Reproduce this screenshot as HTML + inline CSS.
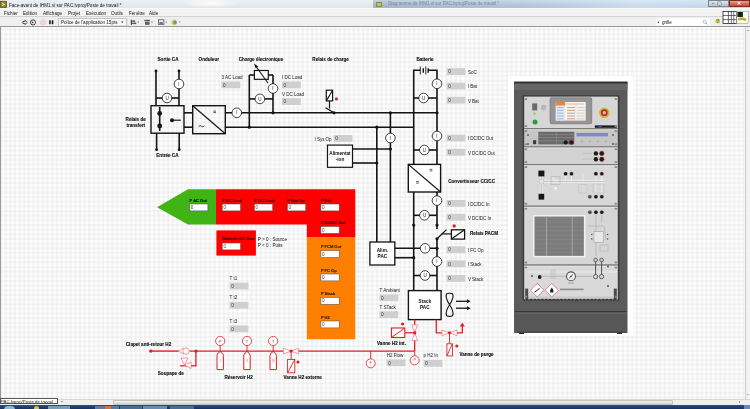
<!DOCTYPE html>
<html><head><meta charset="utf-8">
<style>
html,body{margin:0;padding:0;width:750px;height:409px;overflow:hidden;background:#fff;font-family:'Liberation Sans',sans-serif;}
.abs{position:absolute}
#title{left:0;top:0;width:750px;height:8px;background:linear-gradient(#eef1f4,#dfe4ea)}
#title2{left:373px;top:0;width:377px;height:8px;background:linear-gradient(rgba(255,255,255,.35),rgba(255,255,255,0) 70%),linear-gradient(90deg,#a4b6ce 0%,#b2c4da 40%,#cadcee 70%,#c2d6ea 100%)}
#menu{left:0;top:8px;width:750px;height:9px;background:#f3f3f3;border-top:0.6px solid #fafafa;border-bottom:1px solid #d4d4d4;box-sizing:border-box}
#tool{left:0;top:17px;width:750px;height:10px;background:#efefef;border-bottom:1px solid #9a9a9a;box-sizing:border-box}
#canvas{left:0;top:27px;width:745px;height:372px;background-color:#fcfcfc;
 background-image:linear-gradient(90deg,rgba(120,120,120,0) 0,rgba(120,120,120,.11) 1px,rgba(120,120,120,0) 2px,transparent 2px),linear-gradient(rgba(120,120,120,0) 0,rgba(120,120,120,.11) 1px,rgba(120,120,120,0) 2px,transparent 2px);
 background-size:4.653px 4.671px;background-position:-0.9px -3.2px;border-left:1px solid #9a9a9a;box-sizing:border-box}
.t{font-size:4.6px;color:#111;white-space:nowrap;line-height:1;will-change:transform}
</style></head><body>
<div id="title" class="abs"></div>
<div class="abs" style="left:180px;top:0;width:60px;height:8px;background:radial-gradient(ellipse at 50% 40%,#fdfdfd,rgba(255,255,255,0) 70%)"></div>
<div id="title2" class="abs"></div>
<div class="abs" style="left:376px;top:1.5px;width:6px;height:5px;background:#c8c060;border:0.5px solid #8a8a40;box-sizing:border-box"></div>
<div class="abs t" style="left:388px;top:2.4px;color:#7a8aa0;font-size:4.5px;filter:blur(0.7px)">Diagramme de IHM1.vi sur PAC.lvproj/Poste de travail *</div>
<div class="abs" style="left:708px;top:0;width:20.5px;height:7.2px;background:linear-gradient(#dfe4ea,#b9c2cc);border:0.5px solid #7b8593;box-sizing:border-box"></div>
<div class="abs t" style="left:712px;top:1.5px;font-size:4.5px;color:#333">–&#160;&#160;▢</div>
<div class="abs" style="left:728.5px;top:0;width:21.5px;height:7.2px;background:linear-gradient(#e8a090,#c8452e);border:0.5px solid #7a3020;box-sizing:border-box"></div>
<div class="abs t" style="left:736.5px;top:1.2px;font-size:5px;color:#fff;font-weight:bold">✕</div>
<div class="abs t" style="left:9.3px;top:3.7px;color:#222">Face-avant de IHM1.vi sur PAC.lvproj/Poste de travail *</div>
<svg class="abs" style="left:0;top:0" width="8" height="9" viewBox="0 0 8 9"><rect x="0.6" y="1.2" width="6" height="6.4" fill="#8a8a20" stroke="#4a4a20" stroke-width="0.7"/><path d="M2,2.6 L5.4,4.4 L2,6.2 L2,5 L3.6,4.4 L2,3.8 Z" fill="#f0f060"/></svg>
<div id="menu" class="abs"></div>
<div class="abs t" style="left:3.5px;top:12px">Fichier</div>
<div class="abs t" style="left:22.7px;top:12px">Edition</div>
<div class="abs t" style="left:42.7px;top:12px">Affichage</div>
<div class="abs t" style="left:68px;top:12px">Projet</div>
<div class="abs t" style="left:85.7px;top:12px">Exécution</div>
<div class="abs t" style="left:111px;top:12px">Outils</div>
<div class="abs t" style="left:128.7px;top:12px">Fenêtre</div>
<div class="abs t" style="left:149.3px;top:12px">Aide</div>
<div id="tool" class="abs"></div>
<svg class="abs" style="left:0;top:0;will-change:transform" width="750" height="28" viewBox="0 0 750 28">
 <path d="M22.9,21.4 L24.9,21.4 L24.9,20.2 L27.3,22.4 L24.9,24.6 L24.9,23.4 L22.9,23.4 Z" fill="#fff" stroke="#222" stroke-width="0.8" stroke-linejoin="round"/>
 <circle cx="33" cy="22.4" r="2.6" fill="#eee" stroke="#333" stroke-width="0.9"/>
 <path d="M31.8,21.2 L33.8,22.4 L31.8,23.6 Z" fill="#333"/>
 <circle cx="43" cy="22.3" r="2.7" fill="#ebd6da" stroke="#e4c4ca" stroke-width="0.5"/>
 <rect x="49.2" y="20.3" width="1.5" height="3.9" fill="#111"/><rect x="51.8" y="20.3" width="1.5" height="3.9" fill="#111"/>
 <rect x="58.7" y="18.6" width="67.5" height="7.4" fill="#fafafa" stroke="#a8a8a8" stroke-width="0.6"/>
 <path d="M121.2,21.6 L123.4,21.6 L122.3,23.2 Z" fill="#333"/>
 <line x1="127.1" y1="18.8" x2="127.1" y2="25.8" stroke="#c8c8c8" stroke-width="0.6"/>
 <rect x="130.8" y="19.6" width="1" height="5.2" fill="#222"/><rect x="132.2" y="20.4" width="3" height="1.5" fill="#555"/><rect x="132.2" y="22.6" width="4" height="1.5" fill="#555"/>
 <path d="M137.4,21.8 L139.0,21.8 L138.2,22.8 Z" fill="#333"/>
 <rect x="144.4" y="19.8" width="5.5" height="1.4" fill="#555"/><rect x="145.2" y="22" width="4" height="2.6" fill="#5a6a7a" stroke="#333" stroke-width="0.4"/>
 <path d="M151.2,21.8 L152.8,21.8 L152.0,22.8 Z" fill="#333"/>
 <rect x="158.4" y="19.8" width="5.5" height="4.8" fill="none" stroke="#444" stroke-width="0.7"/><rect x="159.4" y="22" width="3.5" height="2.6" fill="#6a7a8a"/>
 <path d="M165.4,21.8 L167.0,21.8 L166.2,22.8 Z" fill="#333"/>
 <circle cx="174.2" cy="22.4" r="2.8" fill="#d8d060"/><circle cx="175.0" cy="22.4" r="1.8" fill="#58a0a8"/>
 <path d="M178.8,21.8 L180.4,21.8 L179.6,22.8 Z" fill="#333"/>
 <rect x="656" y="18.4" width="54" height="7.2" fill="#fff"/>
 <path d="M659,21.2 L659,23.4 L657.4,22.3 Z" fill="#444"/>
 <circle cx="704.6" cy="21.8" r="1.6" fill="none" stroke="#9aa2aa" stroke-width="0.7"/><line x1="705.8" y1="23" x2="707.2" y2="24.4" stroke="#8a9098" stroke-width="0.9"/>
 <circle cx="717.8" cy="21.2" r="2.4" fill="#c8c050"/><text x="717.8" y="23" font-size="5" font-weight="bold" text-anchor="middle" fill="#7a8a20" font-family="Liberation Sans, sans-serif">?</text>
 <rect x="723" y="11.4" width="13.7" height="12.2" fill="#fff" stroke="#222" stroke-width="0.8"/>
 <line x1="728.4" y1="11.4" x2="728.4" y2="23.6" stroke="#333" stroke-width="0.7"/><line x1="731.3" y1="11.4" x2="731.3" y2="23.6" stroke="#333" stroke-width="0.7"/>
 <line x1="733.8" y1="11.4" x2="733.8" y2="23.6" stroke="#2a3a6a" stroke-width="0.7"/>
 <line x1="723" y1="15.5" x2="736.7" y2="15.5" stroke="#333" stroke-width="0.7"/><line x1="723" y1="19.6" x2="736.7" y2="19.6" stroke="#333" stroke-width="0.7"/>
 <rect x="736.7" y="11.4" width="11.6" height="12.2" fill="#fbfbf0" stroke="#888" stroke-width="0.5"/>
 <rect x="737.4" y="12" width="5.5" height="5" fill="#0a2a10"/>
 <path d="M738,18.5 Q742,16.5 746.5,19 L746,21 Q742,19.5 738.5,20.5 Z" fill="#c0a830"/>
</svg>
<div class="abs t" style="left:60.5px;top:21.1px;font-size:4.6px;color:#222">Police de l'application 15pts</div>
<div class="abs t" style="left:661.6px;top:21.1px;font-size:4.6px;color:#111">grille</div>
<div id="canvas" class="abs"></div>
<div class="abs" style="left:745px;top:27px;width:5px;height:372px;background:linear-gradient(90deg,#eeeeee,#f8f8f8);border-left:0.5px solid #d0d0d0;box-sizing:border-box"></div>
<div class="abs" style="left:746.6px;top:394px;width:0;height:0;border-left:1.2px solid transparent;border-right:1.2px solid transparent;border-top:1.6px solid #666"></div>
<div class="abs" style="left:746.5px;top:30px;width:0;height:0;border-left:1.2px solid transparent;border-right:1.2px solid transparent;border-bottom:1.6px solid #555"></div>
<div class="abs" style="left:0;top:399px;width:750px;height:6px;background:#efefef;border-top:0.5px solid #d6d6d6;box-sizing:border-box"></div>
<div class="abs" style="left:113px;top:399.8px;width:559.7px;height:4.8px;background:linear-gradient(#f2f2f2,#d4d4d4);border:0.5px solid #c4c4c4;box-sizing:border-box;border-radius:1px"></div>
<div class="abs" style="left:0;top:398.4px;width:58px;height:6px;background:#fff;border:0.6px solid #555;box-sizing:border-box"></div>
<div class="abs t" style="left:1.2px;top:399.6px;font-size:4.4px;color:#222">PAC.lvproj/Poste de travail</div>
<div class="abs" style="left:60.5px;top:401px;width:0;height:0;border-left:1.2px solid transparent;border-right:1.2px solid transparent;border-top:1.5px solid #444"></div>
<div class="abs" style="left:739px;top:401px;width:0;height:0;border-top:1.2px solid transparent;border-bottom:1.2px solid transparent;border-left:1.5px solid #555"></div>
<div class="abs" style="left:0;top:405px;width:750px;height:4px;background:linear-gradient(#2a4c8a,#1a3066)"></div>
<div class="abs" style="left:4px;top:405.5px;width:11px;height:4px;border-radius:6px 6px 0 0;background:#8ab8d8"></div>
<div class="abs" style="left:34px;top:406px;width:5px;height:3px;border-radius:3px 3px 0 0;background:#d8c050"></div>
<div class="abs" style="left:48px;top:405.5px;width:22px;height:4px;background:#7a9ac0"></div>
<div class="abs" style="left:95px;top:405.5px;width:24px;height:4px;background:#5a7aa8"></div>
<div class="abs" style="left:105px;top:406px;width:6px;height:3px;background:#e07030"></div>
<div class="abs" style="left:120px;top:405.5px;width:22px;height:4px;background:#4a6a98"></div>
<div class="abs" style="left:143px;top:405.5px;width:24px;height:4px;background:#6a8ab8"></div>
<div class="abs" style="left:170px;top:405.5px;width:24px;height:4px;background:#4a6a98"></div>
<div class="abs" style="left:744px;top:405px;width:6px;height:4px;background:#6a88b0"></div>
<svg class="abs" style="left:0;top:0;will-change:transform" width="750" height="409" viewBox="0 0 750 409" font-family="Liberation Sans, sans-serif">
<rect x="508" y="76" width="125" height="260" fill="#ffffff" />
<rect x="514" y="81.7" width="113.5" height="251.3" fill="#5b5b5b" />
<rect x="514" y="81.7" width="113.5" height="1.9" fill="#2e2e2e" />
<rect x="514" y="83.6" width="113.5" height="6.4" fill="#666666" />
<rect x="515" y="311.2" width="111.8" height="1.2" fill="#2f2f2f" />
<rect x="515" y="312.4" width="111.8" height="20.6" fill="#575757" />
<rect x="516" y="331.5" width="110" height="1.5" fill="#4a4a4a" />
<rect x="522.6" y="95.2" width="96.8" height="205.4" fill="#3c3c3c" />
<rect x="524.2" y="96.6" width="93.6" height="32.0" fill="#d6d6d6" />
<rect x="524.2" y="128.6" width="93.6" height="18.2" fill="#c6c6c6" />
<rect x="524.2" y="146.8" width="93.6" height="17.8" fill="#d2d2d2" />
<rect x="524.2" y="164.6" width="93.6" height="41.6" fill="#d8d8d8" />
<rect x="524.2" y="206.2" width="93.6" height="58.8" fill="#d6d6d6" />
<rect x="524.2" y="265" width="93.6" height="34.2" fill="#d9d9d9" />
<line x1="524.2" y1="128.6" x2="617.8" y2="128.6" stroke="#7a7a7a" stroke-width="1.3"/>
<line x1="524.2" y1="129.79999999999998" x2="617.8" y2="129.79999999999998" stroke="#ececec" stroke-width="0.6"/>
<line x1="524.2" y1="146.8" x2="617.8" y2="146.8" stroke="#7a7a7a" stroke-width="1.3"/>
<line x1="524.2" y1="148.0" x2="617.8" y2="148.0" stroke="#ececec" stroke-width="0.6"/>
<line x1="524.2" y1="164.6" x2="617.8" y2="164.6" stroke="#7a7a7a" stroke-width="1.3"/>
<line x1="524.2" y1="165.79999999999998" x2="617.8" y2="165.79999999999998" stroke="#ececec" stroke-width="0.6"/>
<line x1="524.2" y1="206.2" x2="617.8" y2="206.2" stroke="#7a7a7a" stroke-width="1.3"/>
<line x1="524.2" y1="207.39999999999998" x2="617.8" y2="207.39999999999998" stroke="#ececec" stroke-width="0.6"/>
<line x1="524.2" y1="265" x2="617.8" y2="265" stroke="#7a7a7a" stroke-width="1.3"/>
<line x1="524.2" y1="266.2" x2="617.8" y2="266.2" stroke="#ececec" stroke-width="0.6"/>
<rect x="549.6" y="97.2" width="42.6" height="27.0" fill="#8a8a8a" rx="2.2"/>
<rect x="550.8" y="98.4" width="40.2" height="24.6" fill="#959595" rx="1.8"/>
<rect x="555.7" y="102" width="30.0" height="18.6" fill="#f6f4f2" />
<rect x="555.7" y="102" width="9.5" height="3.6" fill="#f0862a" />
<rect x="555.9" y="106" width="9.1" height="14.4" fill="#dfe8f4" />
<line x1="557" y1="107.6" x2="563.6" y2="107.6" stroke="#7a9ac8" stroke-width="0.6"/>
<line x1="567" y1="107.6" x2="575" y2="107.6" stroke="#c07a50" stroke-width="0.7"/>
<line x1="577" y1="107.6" x2="584.6" y2="107.6" stroke="#b8a090" stroke-width="0.5"/>
<line x1="557" y1="110.4" x2="563.6" y2="110.4" stroke="#7a9ac8" stroke-width="0.6"/>
<line x1="567" y1="110.4" x2="575" y2="110.4" stroke="#c07a50" stroke-width="0.7"/>
<line x1="577" y1="110.4" x2="584.6" y2="110.4" stroke="#b8a090" stroke-width="0.5"/>
<line x1="557" y1="113.2" x2="563.6" y2="113.2" stroke="#7a9ac8" stroke-width="0.6"/>
<line x1="567" y1="113.2" x2="575" y2="113.2" stroke="#c07a50" stroke-width="0.7"/>
<line x1="577" y1="113.2" x2="584.6" y2="113.2" stroke="#b8a090" stroke-width="0.5"/>
<line x1="557" y1="116" x2="563.6" y2="116" stroke="#7a9ac8" stroke-width="0.6"/>
<line x1="567" y1="116" x2="575" y2="116" stroke="#c07a50" stroke-width="0.7"/>
<line x1="577" y1="116" x2="584.6" y2="116" stroke="#b8a090" stroke-width="0.5"/>
<line x1="557" y1="118.8" x2="563.6" y2="118.8" stroke="#7a9ac8" stroke-width="0.6"/>
<line x1="567" y1="118.8" x2="575" y2="118.8" stroke="#c07a50" stroke-width="0.7"/>
<line x1="577" y1="118.8" x2="584.6" y2="118.8" stroke="#b8a090" stroke-width="0.5"/>
<line x1="576" y1="102.4" x2="576" y2="120.4" stroke="#c8c8d8" stroke-width="0.4"/>
<line x1="566" y1="104" x2="584" y2="104" stroke="#d09070" stroke-width="0.6"/>
<rect x="532.2" y="103.4" width="5.0" height="7.0" fill="#6a6a6a" />
<circle cx="543.6" cy="107.6" r="2.8" fill="#b4b8c0" />
<circle cx="534.6" cy="113.6" r="1.3" fill="#9acc6a" />
<circle cx="535" cy="122" r="2.5" fill="#2a9a3a" />
<circle cx="604.3" cy="112.7" r="5.2" fill="#cbb632" />
<circle cx="604.3" cy="112.7" r="3.4" fill="#b8301e" />
<circle cx="604.3" cy="112.7" r="1.7" fill="#f0b0b8" />
<rect x="594.8" y="125.4" width="22.0" height="2.4" fill="#1a1a1a" />
<rect x="598" y="125.6" width="4" height="2.0" fill="#3a4aa0" />
<rect x="538.3" y="131.8" width="36.0" height="12.6" fill="#6a6a6a" />
<line x1="538.3" y1="134.6" x2="574.3" y2="134.6" stroke="#9a9a9a" stroke-width="0.5"/>
<line x1="538.3" y1="137.6" x2="574.3" y2="137.6" stroke="#9a9a9a" stroke-width="0.5"/>
<line x1="538.3" y1="140.8" x2="574.3" y2="140.8" stroke="#9a9a9a" stroke-width="0.5"/>
<line x1="556.3" y1="131.8" x2="556.3" y2="144.4" stroke="#9a9a9a" stroke-width="0.5"/>
<rect x="576.5" y="133" width="31.5" height="3.4" fill="#7d88c8" />
<rect x="533" y="140.2" width="3.2" height="4.0" fill="#3a3a3a" />
<circle cx="565.7" cy="142.4" r="2.1" fill="#1c1c1c" />
<circle cx="571.4" cy="142.4" r="2.1" fill="#2a1414" stroke="#7a2a2a" stroke-width="0.6"/>
<circle cx="528" cy="135" r="0.9" fill="#555" />
<circle cx="528" cy="144" r="0.9" fill="#555" />
<circle cx="613" cy="135" r="0.9" fill="#555" />
<circle cx="613" cy="144" r="0.9" fill="#555" />
<circle cx="582" cy="141.5" r="1.4" fill="#b8b8b8" />
<circle cx="590" cy="141.5" r="1.4" fill="#b8b8b8" />
<circle cx="598" cy="141.5" r="1.4" fill="#b8b8b8" />
<circle cx="606" cy="141.5" r="1.4" fill="#b8b8b8" />
<circle cx="595.9" cy="153.4" r="2.2" fill="#1c1c1c" />
<circle cx="601.8" cy="153.4" r="2.2" fill="#2a1414" stroke="#7a2a2a" stroke-width="0.6"/>
<circle cx="595.9" cy="159.2" r="2.2" fill="#1c1c1c" />
<circle cx="601.8" cy="159.2" r="2.2" fill="#2a1414" stroke="#7a2a2a" stroke-width="0.6"/>
<line x1="582" y1="153.4" x2="592" y2="153.4" stroke="#aaaaaa" stroke-width="0.4"/>
<line x1="582" y1="159.2" x2="592" y2="159.2" stroke="#aaaaaa" stroke-width="0.4"/>
<line x1="537" y1="180.4" x2="605" y2="180.4" stroke="#f4f4f4" stroke-width="0.7"/>
<line x1="537" y1="182.6" x2="605" y2="182.6" stroke="#f4f4f4" stroke-width="0.7"/>
<line x1="540.4" y1="176.4" x2="540.4" y2="193.8" stroke="#f4f4f4" stroke-width="0.7"/>
<line x1="542.4" y1="176.4" x2="542.4" y2="193.8" stroke="#f4f4f4" stroke-width="0.7"/>
<line x1="565.6" y1="176" x2="565.6" y2="181" stroke="#f4f4f4" stroke-width="0.7"/>
<line x1="571.5" y1="176" x2="571.5" y2="181" stroke="#f4f4f4" stroke-width="0.7"/>
<line x1="595.9" y1="176" x2="595.9" y2="194.6" stroke="#f4f4f4" stroke-width="0.7"/>
<line x1="601.8" y1="176" x2="601.8" y2="194.6" stroke="#f4f4f4" stroke-width="0.7"/>
<line x1="551" y1="176.8" x2="560" y2="184.2" stroke="#f4f4f4" stroke-width="0.7"/>
<line x1="583" y1="174" x2="583" y2="181" stroke="#f4f4f4" stroke-width="0.7"/>
<line x1="537" y1="181.5" x2="605" y2="181.5" stroke="#a8a8a8" stroke-width="0.4"/>
<line x1="541.4" y1="176.4" x2="541.4" y2="193.8" stroke="#a8a8a8" stroke-width="0.4"/>
<circle cx="541.4" cy="181.5" r="2.5" fill="#e6e6e6" stroke="#a8a8a8" stroke-width="0.5"/>
<rect x="551" y="176.8" width="9" height="7.4" fill="none" stroke="#a8a8a8" stroke-width="0.5"/>
<circle cx="555.5" cy="188.4" r="1.3" fill="#f8f8f8" />
<rect x="578.6" y="184.5" width="8.4" height="8.5" fill="none" stroke="#b0b0b0" stroke-width="0.5" stroke-dasharray="1,0.6"/>
<rect x="593" y="184" width="11" height="9" fill="none" stroke="#b0b0b0" stroke-width="0.5" stroke-dasharray="1,0.6"/>
<rect x="538.4" y="170.6" width="6.0" height="5.8" fill="#151515" />
<rect x="538.6" y="193.8" width="5.6" height="5.8" fill="#151515" />
<circle cx="565.6" cy="173.8" r="2.3" fill="#bdbdbd" />
<circle cx="565.6" cy="173.8" r="1.8" fill="#151515" />
<circle cx="571.5" cy="173.8" r="2.3" fill="#bdbdbd" />
<circle cx="571.5" cy="173.8" r="1.8" fill="#3a1818" />
<circle cx="595.9" cy="173.8" r="2.3" fill="#bdbdbd" />
<circle cx="595.9" cy="173.8" r="1.8" fill="#151515" />
<circle cx="601.8" cy="173.8" r="2.3" fill="#bdbdbd" />
<circle cx="601.8" cy="173.8" r="1.8" fill="#3a1818" />
<circle cx="589.8" cy="196.8" r="2.3" fill="#bdbdbd" />
<circle cx="589.8" cy="196.8" r="1.8" fill="#4e4e4e" />
<circle cx="595.9" cy="196.8" r="2.3" fill="#bdbdbd" />
<circle cx="595.9" cy="196.8" r="1.8" fill="#151515" />
<circle cx="601.8" cy="196.8" r="2.3" fill="#bdbdbd" />
<circle cx="601.8" cy="196.8" r="1.8" fill="#3a1818" />
<circle cx="589.9" cy="212.3" r="2.3" fill="#bdbdbd" />
<circle cx="589.9" cy="212.3" r="1.8" fill="#4e4e4e" />
<circle cx="595.9" cy="212.3" r="2.3" fill="#bdbdbd" />
<circle cx="595.9" cy="212.3" r="1.8" fill="#151515" />
<circle cx="601.8" cy="212.3" r="2.3" fill="#bdbdbd" />
<circle cx="601.8" cy="212.3" r="1.8" fill="#3a1818" />
<rect x="532.8" y="215" width="52.8" height="42.4" fill="#f0f0f0" />
<rect x="534.6" y="216.6" width="49.2" height="39.2" fill="#707070" />
<line x1="534.6" y1="217.4" x2="583.8" y2="217.4" stroke="#999999" stroke-width="0.5"/>
<line x1="534.6" y1="218.70000000000002" x2="583.8" y2="218.70000000000002" stroke="#999999" stroke-width="0.5"/>
<line x1="534.6" y1="220.0" x2="583.8" y2="220.0" stroke="#999999" stroke-width="0.5"/>
<line x1="534.6" y1="221.3" x2="583.8" y2="221.3" stroke="#999999" stroke-width="0.5"/>
<line x1="534.6" y1="222.6" x2="583.8" y2="222.6" stroke="#999999" stroke-width="0.5"/>
<line x1="534.6" y1="223.9" x2="583.8" y2="223.9" stroke="#999999" stroke-width="0.5"/>
<line x1="534.6" y1="225.20000000000002" x2="583.8" y2="225.20000000000002" stroke="#999999" stroke-width="0.5"/>
<line x1="534.6" y1="226.5" x2="583.8" y2="226.5" stroke="#999999" stroke-width="0.5"/>
<line x1="534.6" y1="227.8" x2="583.8" y2="227.8" stroke="#999999" stroke-width="0.5"/>
<line x1="534.6" y1="229.1" x2="583.8" y2="229.1" stroke="#999999" stroke-width="0.5"/>
<line x1="534.6" y1="230.4" x2="583.8" y2="230.4" stroke="#999999" stroke-width="0.5"/>
<line x1="534.6" y1="231.70000000000002" x2="583.8" y2="231.70000000000002" stroke="#999999" stroke-width="0.5"/>
<line x1="534.6" y1="233.0" x2="583.8" y2="233.0" stroke="#999999" stroke-width="0.5"/>
<line x1="534.6" y1="234.3" x2="583.8" y2="234.3" stroke="#999999" stroke-width="0.5"/>
<line x1="534.6" y1="235.6" x2="583.8" y2="235.6" stroke="#999999" stroke-width="0.5"/>
<line x1="534.6" y1="236.9" x2="583.8" y2="236.9" stroke="#999999" stroke-width="0.5"/>
<line x1="534.6" y1="238.20000000000002" x2="583.8" y2="238.20000000000002" stroke="#999999" stroke-width="0.5"/>
<line x1="534.6" y1="239.5" x2="583.8" y2="239.5" stroke="#999999" stroke-width="0.5"/>
<line x1="534.6" y1="240.8" x2="583.8" y2="240.8" stroke="#999999" stroke-width="0.5"/>
<line x1="534.6" y1="242.1" x2="583.8" y2="242.1" stroke="#999999" stroke-width="0.5"/>
<line x1="534.6" y1="243.4" x2="583.8" y2="243.4" stroke="#999999" stroke-width="0.5"/>
<line x1="534.6" y1="244.70000000000002" x2="583.8" y2="244.70000000000002" stroke="#999999" stroke-width="0.5"/>
<line x1="534.6" y1="246.0" x2="583.8" y2="246.0" stroke="#999999" stroke-width="0.5"/>
<line x1="534.6" y1="247.3" x2="583.8" y2="247.3" stroke="#999999" stroke-width="0.5"/>
<line x1="534.6" y1="248.60000000000002" x2="583.8" y2="248.60000000000002" stroke="#999999" stroke-width="0.5"/>
<line x1="534.6" y1="249.9" x2="583.8" y2="249.9" stroke="#999999" stroke-width="0.5"/>
<line x1="534.6" y1="251.20000000000002" x2="583.8" y2="251.20000000000002" stroke="#999999" stroke-width="0.5"/>
<line x1="534.6" y1="252.5" x2="583.8" y2="252.5" stroke="#999999" stroke-width="0.5"/>
<line x1="534.6" y1="253.8" x2="583.8" y2="253.8" stroke="#999999" stroke-width="0.5"/>
<line x1="534.6" y1="255.10000000000002" x2="583.8" y2="255.10000000000002" stroke="#999999" stroke-width="0.5"/>
<line x1="546.5" y1="216.6" x2="546.5" y2="255.8" stroke="#b4b4b4" stroke-width="0.7"/>
<line x1="572.2" y1="216.6" x2="572.2" y2="255.8" stroke="#b4b4b4" stroke-width="0.7"/>
<line x1="595.9" y1="214.5" x2="595.9" y2="231.7" stroke="#a0a0a0" stroke-width="0.5"/>
<line x1="595.9" y1="242.2" x2="595.9" y2="256" stroke="#a0a0a0" stroke-width="0.5"/>
<line x1="601.8" y1="214.5" x2="601.8" y2="222" stroke="#a0a0a0" stroke-width="0.5"/>
<line x1="588" y1="226" x2="604" y2="226" stroke="#a0a0a0" stroke-width="0.5"/>
<line x1="604" y1="226" x2="606" y2="240" stroke="#a0a0a0" stroke-width="0.5"/>
<rect x="594" y="231.7" width="9.3" height="10.5" fill="#e8e8e8" stroke="#9a9a9a" stroke-width="0.5"/>
<circle cx="591.8" cy="234.5" r="0.8" fill="#555" />
<circle cx="591.8" cy="239" r="0.8" fill="#555" />
<circle cx="607.6" cy="234.5" r="0.8" fill="#555" />
<circle cx="607.6" cy="239" r="0.8" fill="#555" />
<rect x="600" y="245" width="8" height="6" fill="none" stroke="#a8a8a8" stroke-width="0.5"/>
<path d="M528,272 L617,272" stroke="#f8f8f8" stroke-width="0.6"/>
<circle cx="571" cy="276.3" r="5" fill="#555" />
<circle cx="571" cy="276.3" r="3.9" fill="#f0f0f0" />
<line x1="569" y1="278.4" x2="573.2" y2="274.4" stroke="#333" stroke-width="0.7"/>
<circle cx="571" cy="276.3" r="0.7" fill="#222" />
<rect x="568" y="282" width="6" height="2" fill="#bdbdbd" />
<circle cx="539.7" cy="277" r="1.9" fill="#1a1a1a" />
<line x1="541" y1="276.3" x2="566" y2="276.3" stroke="#a4a4a4" stroke-width="0.6"/>
<line x1="576" y1="276.3" x2="592" y2="276.3" stroke="#a4a4a4" stroke-width="0.6"/>
<line x1="551" y1="269" x2="551" y2="279" stroke="#a8a8a8" stroke-width="0.5"/>
<line x1="553" y1="269" x2="553" y2="279" stroke="#a8a8a8" stroke-width="0.5"/>
<line x1="555" y1="269" x2="555" y2="279" stroke="#a8a8a8" stroke-width="0.5"/>
<rect x="560" y="288.6" width="23.5" height="1.6" fill="#8e8e8e" />
<circle cx="595.6" cy="260" r="1.8" fill="none" stroke="#505050" stroke-width="0.9"/>
<line x1="595.6" y1="261.8" x2="595.6" y2="274.5" stroke="#505050" stroke-width="1.0"/>
<circle cx="595.6" cy="276.6" r="2.1" fill="none" stroke="#505050" stroke-width="0.9"/>
<circle cx="601.6" cy="260" r="1.8" fill="none" stroke="#505050" stroke-width="0.9"/>
<line x1="601.6" y1="261.8" x2="601.6" y2="274.5" stroke="#505050" stroke-width="1.0"/>
<circle cx="601.6" cy="276.6" r="2.1" fill="none" stroke="#505050" stroke-width="0.9"/>
<polygon points="537.2,283.4 544.0,290.2 537.2,297 530.4000000000001,290.2" fill="#fff" stroke="#d8828e" stroke-width="1"/>
<polygon points="551.8,283.4 558.5999999999999,290.2 551.8,297 545.0,290.2" fill="#fff" stroke="#d8828e" stroke-width="1"/>
<line x1="534.5" y1="292.2" x2="539.6" y2="288.4" stroke="#222" stroke-width="1"/>
<path d="M550.2,292.4 Q549.8,289.6 551.8,287.6 Q553.8,289.6 553.4,292.4 Z" fill="#222"/>
<rect x="524.2" y="296.6" width="93.6" height="2.6" fill="#c8c8c8" />
<rect x="525.2" y="288.6" width="3.0" height="10.4" fill="#4a4a4a" />
<rect x="613.8" y="288.6" width="3.0" height="10.4" fill="#4a4a4a" />
<circle cx="532" cy="276" r="0.9" fill="#444" />
<circle cx="608" cy="266.5" r="0.9" fill="#444" />
<circle cx="608" cy="286" r="0.9" fill="#444" />
<line x1="526" y1="299.4" x2="616" y2="299.4" stroke="#2a2a2a" stroke-width="0.9" stroke-dasharray="2.4,1.4"/>
<rect x="519" y="332.6" width="5" height="1.4" fill="#2a2a2a" />
<rect x="617" y="332.6" width="5" height="1.4" fill="#2a2a2a" />
<rect x="515" y="312.4" width="111.8" height="1.6" fill="#626262" />
<rect x="524.6" y="98.19999999999999" width="2.6" height="1.8" fill="#8a8a8a" />
<rect x="524.6" y="125.19999999999999" width="2.6" height="1.8" fill="#8a8a8a" />
<rect x="614.6" y="98.19999999999999" width="2.6" height="1.8" fill="#8a8a8a" />
<rect x="614.6" y="125.19999999999999" width="2.6" height="1.8" fill="#8a8a8a" />
<rect x="524.6" y="130.2" width="2.6" height="1.8" fill="#8a8a8a" />
<rect x="524.6" y="143.4" width="2.6" height="1.8" fill="#8a8a8a" />
<rect x="614.6" y="130.2" width="2.6" height="1.8" fill="#8a8a8a" />
<rect x="614.6" y="143.4" width="2.6" height="1.8" fill="#8a8a8a" />
<rect x="524.6" y="148.4" width="2.6" height="1.8" fill="#8a8a8a" />
<rect x="524.6" y="161.2" width="2.6" height="1.8" fill="#8a8a8a" />
<rect x="614.6" y="148.4" width="2.6" height="1.8" fill="#8a8a8a" />
<rect x="614.6" y="161.2" width="2.6" height="1.8" fill="#8a8a8a" />
<rect x="524.6" y="166.2" width="2.6" height="1.8" fill="#8a8a8a" />
<rect x="524.6" y="202.79999999999998" width="2.6" height="1.8" fill="#8a8a8a" />
<rect x="614.6" y="166.2" width="2.6" height="1.8" fill="#8a8a8a" />
<rect x="614.6" y="202.79999999999998" width="2.6" height="1.8" fill="#8a8a8a" />
<rect x="524.6" y="207.79999999999998" width="2.6" height="1.8" fill="#8a8a8a" />
<rect x="524.6" y="261.6" width="2.6" height="1.8" fill="#8a8a8a" />
<rect x="614.6" y="207.79999999999998" width="2.6" height="1.8" fill="#8a8a8a" />
<rect x="614.6" y="261.6" width="2.6" height="1.8" fill="#8a8a8a" />
<rect x="524.6" y="266.6" width="2.6" height="1.8" fill="#8a8a8a" />
<rect x="524.6" y="295.8" width="2.6" height="1.8" fill="#8a8a8a" />
<rect x="614.6" y="266.6" width="2.6" height="1.8" fill="#8a8a8a" />
<rect x="614.6" y="295.8" width="2.6" height="1.8" fill="#8a8a8a" />
<polygon points="157,207.2 188,189.3 216,189.3 216,224.6 188,224.6" fill="#3fb414" stroke="none" stroke-width="0"/>
<polygon points="216,189.3 355.3,189.3 355.3,237.6 306.8,237.6 306.8,224.6 216,224.6" fill="#fe0000" stroke="none" stroke-width="0"/>
<rect x="306.8" y="237.6" width="48.5" height="101.70000000000002" fill="#ff8000"/>
<rect x="216.4" y="230.4" width="39.5" height="25.19999999999999" fill="#fe0000"/>
<text x="189.6" y="200.1" font-size="4.0" font-weight="bold" text-anchor="start" fill="#0a1a00" dominant-baseline="central" stroke="#0a1a00" stroke-width="0.14">P AC Out</text>
<rect x="189.6" y="204" width="18.3" height="6.9" fill="#fff" stroke="#4a4a4a" stroke-width="0.5"/>
<text x="190.79999999999998" y="207.5" font-size="4.6" font-weight="normal" text-anchor="start" fill="#444" dominant-baseline="central">0</text>
<text x="222.2" y="200.1" font-size="4.0" font-weight="bold" text-anchor="start" fill="#3a0000" dominant-baseline="central" stroke="#3a0000" stroke-width="0.14">P AC Load</text>
<rect x="222.2" y="204" width="18.3" height="6.9" fill="#fff" stroke="#4a4a4a" stroke-width="0.5"/>
<text x="223.39999999999998" y="207.5" font-size="4.6" font-weight="normal" text-anchor="start" fill="#444" dominant-baseline="central">0</text>
<text x="254.4" y="200.1" font-size="4.0" font-weight="bold" text-anchor="start" fill="#3a0000" dominant-baseline="central" stroke="#3a0000" stroke-width="0.14">P DC Load</text>
<rect x="254.4" y="204" width="18.3" height="6.9" fill="#fff" stroke="#4a4a4a" stroke-width="0.5"/>
<text x="255.6" y="207.5" font-size="4.6" font-weight="normal" text-anchor="start" fill="#444" dominant-baseline="central">0</text>
<text x="287.4" y="200.1" font-size="4.0" font-weight="bold" text-anchor="start" fill="#3a0000" dominant-baseline="central" stroke="#3a0000" stroke-width="0.14">P Sys Op</text>
<rect x="287.4" y="204" width="18.3" height="6.9" fill="#fff" stroke="#4a4a4a" stroke-width="0.5"/>
<text x="288.59999999999997" y="207.5" font-size="4.6" font-weight="normal" text-anchor="start" fill="#444" dominant-baseline="central">0</text>
<text x="320.9" y="200.1" font-size="4.0" font-weight="bold" text-anchor="start" fill="#3a0000" dominant-baseline="central" stroke="#3a0000" stroke-width="0.14">P Bat</text>
<rect x="320.9" y="204" width="18.3" height="6.9" fill="#fff" stroke="#4a4a4a" stroke-width="0.5"/>
<text x="322.09999999999997" y="207.5" font-size="4.6" font-weight="normal" text-anchor="start" fill="#444" dominant-baseline="central">0</text>
<text x="320.9" y="222.6" font-size="4.0" font-weight="bold" text-anchor="start" fill="#3a0000" dominant-baseline="central" stroke="#3a0000" stroke-width="0.14">P DC/DC Out</text>
<rect x="320.9" y="226.5" width="18.3" height="6.9" fill="#fff" stroke="#4a4a4a" stroke-width="0.5"/>
<text x="322.09999999999997" y="230.0" font-size="4.6" font-weight="normal" text-anchor="start" fill="#444" dominant-baseline="central">0</text>
<rect x="222.2" y="243" width="18.3" height="6.9" fill="#fff" stroke="#4a4a4a" stroke-width="0.5"/>
<text x="223.4" y="246.5" font-size="4.6" font-weight="normal" text-anchor="start" fill="#444" dominant-baseline="central">0</text>
<text x="222" y="238.2" font-size="4.3" font-weight="bold" text-anchor="start" fill="#3a0000" dominant-baseline="central" stroke="#3a0000" stroke-width="0.14">Batterie DC Bus</text>
<text x="320.9" y="246.7" font-size="4.0" font-weight="bold" text-anchor="start" fill="#3a1800" dominant-baseline="central" stroke="#3a1800" stroke-width="0.14">P FCM Out</text>
<rect x="320.9" y="250.6" width="18.3" height="6.9" fill="#fff" stroke="#4a4a4a" stroke-width="0.5"/>
<text x="322.09999999999997" y="254.1" font-size="4.6" font-weight="normal" text-anchor="start" fill="#444" dominant-baseline="central">0</text>
<text x="320.9" y="270.1" font-size="4.0" font-weight="bold" text-anchor="start" fill="#3a1800" dominant-baseline="central" stroke="#3a1800" stroke-width="0.14">P FC Op</text>
<rect x="320.9" y="274" width="18.3" height="6.9" fill="#fff" stroke="#4a4a4a" stroke-width="0.5"/>
<text x="322.09999999999997" y="277.5" font-size="4.6" font-weight="normal" text-anchor="start" fill="#444" dominant-baseline="central">0</text>
<text x="320.9" y="293.5" font-size="4.0" font-weight="bold" text-anchor="start" fill="#3a1800" dominant-baseline="central" stroke="#3a1800" stroke-width="0.14">P Stack</text>
<rect x="320.9" y="297.4" width="18.3" height="6.9" fill="#fff" stroke="#4a4a4a" stroke-width="0.5"/>
<text x="322.09999999999997" y="300.9" font-size="4.6" font-weight="normal" text-anchor="start" fill="#444" dominant-baseline="central">0</text>
<text x="320.9" y="317.1" font-size="4.0" font-weight="bold" text-anchor="start" fill="#3a1800" dominant-baseline="central" stroke="#3a1800" stroke-width="0.14">P H2</text>
<rect x="320.9" y="321" width="18.3" height="6.9" fill="#fff" stroke="#4a4a4a" stroke-width="0.5"/>
<text x="322.09999999999997" y="324.5" font-size="4.6" font-weight="normal" text-anchor="start" fill="#444" dominant-baseline="central">0</text>
<text x="257.8" y="239.4" font-size="4.6" font-weight="normal" text-anchor="start" fill="#111" dominant-baseline="central">P &gt; 0 : Source</text>
<text x="257.8" y="245.2" font-size="4.6" font-weight="normal" text-anchor="start" fill="#111" dominant-baseline="central">P &lt; 0 : Puits</text>
<rect x="221.5" y="81.5" width="18.8" height="6.8" fill="#cfcfcf"/>
<text x="223.1" y="85.1" font-size="4.6" font-weight="normal" text-anchor="start" fill="#3a3a3a" dominant-baseline="central">0</text>
<text x="221.5" y="77.45" font-size="4.6" font-weight="normal" text-anchor="start" fill="#1a1a1a" dominant-baseline="central" letter-spacing="-0.04">3 AC Load</text>
<rect x="282" y="81.5" width="18.8" height="6.8" fill="#cfcfcf"/>
<text x="283.6" y="85.1" font-size="4.6" font-weight="normal" text-anchor="start" fill="#3a3a3a" dominant-baseline="central">0</text>
<text x="282" y="77.45" font-size="4.6" font-weight="normal" text-anchor="start" fill="#1a1a1a" dominant-baseline="central" letter-spacing="-0.04">I DC Load</text>
<rect x="282" y="98.2" width="18.8" height="6.8" fill="#cfcfcf"/>
<text x="283.6" y="101.8" font-size="4.6" font-weight="normal" text-anchor="start" fill="#3a3a3a" dominant-baseline="central">0</text>
<text x="282" y="94.15" font-size="4.6" font-weight="normal" text-anchor="start" fill="#1a1a1a" dominant-baseline="central" letter-spacing="-0.04">V DC Load</text>
<rect x="333.6" y="135" width="18.8" height="6.8" fill="#cfcfcf"/>
<text x="335.20000000000005" y="138.6" font-size="4.6" font-weight="normal" text-anchor="start" fill="#3a3a3a" dominant-baseline="central">0</text>
<text x="331.6" y="139.2" font-size="4.6" font-weight="normal" text-anchor="end" fill="#1a1a1a" dominant-baseline="central" letter-spacing="-0.06">I Sys Op</text>
<rect x="446.6" y="68.2" width="18.8" height="6.8" fill="#cfcfcf"/>
<text x="448.20000000000005" y="71.8" font-size="4.6" font-weight="normal" text-anchor="start" fill="#3a3a3a" dominant-baseline="central">0</text>
<text x="467.90000000000003" y="72.4" font-size="4.6" font-weight="normal" text-anchor="start" fill="#1a1a1a" dominant-baseline="central" letter-spacing="-0.06">SoC</text>
<rect x="446.6" y="82.6" width="18.8" height="6.8" fill="#cfcfcf"/>
<text x="448.20000000000005" y="86.2" font-size="4.6" font-weight="normal" text-anchor="start" fill="#3a3a3a" dominant-baseline="central">0</text>
<text x="467.90000000000003" y="86.8" font-size="4.6" font-weight="normal" text-anchor="start" fill="#1a1a1a" dominant-baseline="central" letter-spacing="-0.06">I Bat</text>
<rect x="446.6" y="96.8" width="18.8" height="6.8" fill="#cfcfcf"/>
<text x="448.20000000000005" y="100.4" font-size="4.6" font-weight="normal" text-anchor="start" fill="#3a3a3a" dominant-baseline="central">0</text>
<text x="467.90000000000003" y="101.0" font-size="4.6" font-weight="normal" text-anchor="start" fill="#1a1a1a" dominant-baseline="central" letter-spacing="-0.06">V Bat</text>
<rect x="446.6" y="134.6" width="18.8" height="6.8" fill="#cfcfcf"/>
<text x="448.20000000000005" y="138.2" font-size="4.6" font-weight="normal" text-anchor="start" fill="#3a3a3a" dominant-baseline="central">0</text>
<text x="467.90000000000003" y="138.8" font-size="4.6" font-weight="normal" text-anchor="start" fill="#1a1a1a" dominant-baseline="central" letter-spacing="-0.06">I DC/DC Out</text>
<rect x="446.6" y="148.8" width="18.8" height="6.8" fill="#cfcfcf"/>
<text x="448.20000000000005" y="152.4" font-size="4.6" font-weight="normal" text-anchor="start" fill="#3a3a3a" dominant-baseline="central">0</text>
<text x="467.90000000000003" y="153.0" font-size="4.6" font-weight="normal" text-anchor="start" fill="#1a1a1a" dominant-baseline="central" letter-spacing="-0.06">V DC/DC Out</text>
<rect x="446.6" y="200" width="18.8" height="6.8" fill="#cfcfcf"/>
<text x="448.20000000000005" y="203.6" font-size="4.6" font-weight="normal" text-anchor="start" fill="#3a3a3a" dominant-baseline="central">0</text>
<text x="467.90000000000003" y="204.2" font-size="4.6" font-weight="normal" text-anchor="start" fill="#1a1a1a" dominant-baseline="central" letter-spacing="-0.06">I DC/DC In</text>
<rect x="446.6" y="213.8" width="18.8" height="6.8" fill="#cfcfcf"/>
<text x="448.20000000000005" y="217.4" font-size="4.6" font-weight="normal" text-anchor="start" fill="#3a3a3a" dominant-baseline="central">0</text>
<text x="467.90000000000003" y="218.0" font-size="4.6" font-weight="normal" text-anchor="start" fill="#1a1a1a" dominant-baseline="central" letter-spacing="-0.06">V DC/DC In</text>
<rect x="446.6" y="246.3" width="18.8" height="6.8" fill="#cfcfcf"/>
<text x="448.20000000000005" y="249.9" font-size="4.6" font-weight="normal" text-anchor="start" fill="#3a3a3a" dominant-baseline="central">0</text>
<text x="467.90000000000003" y="250.5" font-size="4.6" font-weight="normal" text-anchor="start" fill="#1a1a1a" dominant-baseline="central" letter-spacing="-0.06">I FC Op</text>
<rect x="446.6" y="260.4" width="18.8" height="6.8" fill="#cfcfcf"/>
<text x="448.20000000000005" y="264.0" font-size="4.6" font-weight="normal" text-anchor="start" fill="#3a3a3a" dominant-baseline="central">0</text>
<text x="467.90000000000003" y="264.6" font-size="4.6" font-weight="normal" text-anchor="start" fill="#1a1a1a" dominant-baseline="central" letter-spacing="-0.06">I Stack</text>
<rect x="446.6" y="275" width="18.8" height="6.8" fill="#cfcfcf"/>
<text x="448.20000000000005" y="278.6" font-size="4.6" font-weight="normal" text-anchor="start" fill="#3a3a3a" dominant-baseline="central">0</text>
<text x="467.90000000000003" y="279.2" font-size="4.6" font-weight="normal" text-anchor="start" fill="#1a1a1a" dominant-baseline="central" letter-spacing="-0.06">V Stack</text>
<rect x="379.5" y="294.4" width="18.8" height="6.8" fill="#cfcfcf"/>
<text x="381.1" y="298.0" font-size="4.6" font-weight="normal" text-anchor="start" fill="#3a3a3a" dominant-baseline="central">0</text>
<text x="379.5" y="290.35" font-size="4.6" font-weight="normal" text-anchor="start" fill="#1a1a1a" dominant-baseline="central" letter-spacing="-0.04">T Ambiant</text>
<rect x="379.5" y="311.2" width="18.8" height="6.8" fill="#cfcfcf"/>
<text x="381.1" y="314.8" font-size="4.6" font-weight="normal" text-anchor="start" fill="#3a3a3a" dominant-baseline="central">0</text>
<text x="379.5" y="307.15" font-size="4.6" font-weight="normal" text-anchor="start" fill="#1a1a1a" dominant-baseline="central" letter-spacing="-0.04">T STack</text>
<rect x="229.6" y="282.6" width="18.8" height="6.8" fill="#cfcfcf"/>
<text x="231.2" y="286.2" font-size="4.6" font-weight="normal" text-anchor="start" fill="#3a3a3a" dominant-baseline="central">0</text>
<text x="229.6" y="278.55" font-size="4.6" font-weight="normal" text-anchor="start" fill="#1a1a1a" dominant-baseline="central" letter-spacing="-0.04">T t1</text>
<rect x="229.6" y="301.8" width="18.8" height="6.8" fill="#cfcfcf"/>
<text x="231.2" y="305.4" font-size="4.6" font-weight="normal" text-anchor="start" fill="#3a3a3a" dominant-baseline="central">0</text>
<text x="229.6" y="297.75" font-size="4.6" font-weight="normal" text-anchor="start" fill="#1a1a1a" dominant-baseline="central" letter-spacing="-0.04">T t2</text>
<rect x="229.6" y="325.4" width="18.8" height="6.8" fill="#cfcfcf"/>
<text x="231.2" y="329.0" font-size="4.6" font-weight="normal" text-anchor="start" fill="#3a3a3a" dominant-baseline="central">0</text>
<text x="229.6" y="321.35" font-size="4.6" font-weight="normal" text-anchor="start" fill="#1a1a1a" dominant-baseline="central" letter-spacing="-0.04">T t3</text>
<rect x="386.7" y="359.4" width="18.8" height="6.8" fill="#cfcfcf"/>
<text x="388.3" y="363.0" font-size="4.6" font-weight="normal" text-anchor="start" fill="#3a3a3a" dominant-baseline="central">0</text>
<text x="386.7" y="355.35" font-size="4.6" font-weight="normal" text-anchor="start" fill="#1a1a1a" dominant-baseline="central" letter-spacing="-0.04">H2 Flow</text>
<rect x="423.6" y="360" width="18.8" height="6.8" fill="#cfcfcf"/>
<text x="425.20000000000005" y="363.6" font-size="4.6" font-weight="normal" text-anchor="start" fill="#3a3a3a" dominant-baseline="central">0</text>
<text x="423.6" y="355.95" font-size="4.6" font-weight="normal" text-anchor="start" fill="#1a1a1a" dominant-baseline="central" letter-spacing="-0.04">p H2 In</text>
<text x="168" y="59.8" font-size="4.6" font-weight="bold" text-anchor="middle" fill="#111" dominant-baseline="central" stroke="#111" stroke-width="0.12">Sortie CA</text>
<line x1="156" y1="71" x2="156" y2="105.7" stroke="#151515" stroke-width="1.6"/>
<line x1="179" y1="71" x2="179" y2="105.7" stroke="#151515" stroke-width="1.6"/>
<circle cx="156" cy="71" r="1.4" fill="#151515"/>
<circle cx="179" cy="71" r="1.4" fill="#151515"/>
<line x1="156" y1="98" x2="179" y2="98" stroke="#151515" stroke-width="1.6"/>
<circle cx="179" cy="84" r="4.8" fill="#fff" stroke="#151515" stroke-width="0.8"/>
<text x="179" y="84.1" font-size="4.5" font-weight="normal" text-anchor="middle" fill="#151515" dominant-baseline="central">I</text>
<circle cx="167" cy="98" r="4.8" fill="#fff" stroke="#151515" stroke-width="0.8"/>
<text x="167" y="98.1" font-size="4.5" font-weight="normal" text-anchor="middle" fill="#151515" dominant-baseline="central">U</text>
<rect x="151" y="105.7" width="33" height="27.499999999999986" stroke="#151515" stroke-width="1.4" fill="none"/>
<line x1="159.7" y1="107" x2="159.7" y2="131" stroke="#151515" stroke-width="1.6"/>
<circle cx="159.7" cy="113.4" r="2.4" fill="#151515"/>
<circle cx="159.7" cy="126" r="2.4" fill="#151515"/>
<circle cx="172" cy="120.2" r="2" fill="#151515"/>
<line x1="172" y1="120.2" x2="180.8" y2="120.2" stroke="#151515" stroke-width="1.2"/>
<line x1="156.6" y1="133.2" x2="156.6" y2="149.7" stroke="#151515" stroke-width="1.6"/>
<line x1="179.2" y1="133.2" x2="179.2" y2="149.7" stroke="#151515" stroke-width="1.6"/>
<circle cx="156.6" cy="149.7" r="1.4" fill="#151515"/>
<circle cx="179.2" cy="149.7" r="1.4" fill="#151515"/>
<text x="135.7" y="119.1" font-size="4.6" font-weight="bold" text-anchor="middle" fill="#111" dominant-baseline="central" stroke="#111" stroke-width="0.12">Relais de</text>
<text x="135.7" y="125.3" font-size="4.6" font-weight="bold" text-anchor="middle" fill="#111" dominant-baseline="central" stroke="#111" stroke-width="0.12">transfert</text>
<text x="167.4" y="155.9" font-size="4.6" font-weight="bold" text-anchor="middle" fill="#111" dominant-baseline="central" stroke="#111" stroke-width="0.12">Entrée CA</text>
<line x1="184" y1="112.8" x2="192.7" y2="112.8" stroke="#151515" stroke-width="1.6"/>
<line x1="184" y1="127.2" x2="192.7" y2="127.2" stroke="#151515" stroke-width="1.6"/>
<text x="208.8" y="59.8" font-size="4.6" font-weight="bold" text-anchor="middle" fill="#111" dominant-baseline="central" stroke="#111" stroke-width="0.12">Onduleur</text>
<rect x="192.7" y="105.7" width="32.60000000000002" height="27.999999999999986" stroke="#151515" stroke-width="1.4" fill="none"/>
<line x1="192.7" y1="105.7" x2="225.3" y2="133.7" stroke="#151515" stroke-width="1.2"/>
<line x1="213.4" y1="111.1" x2="216" y2="111.1" stroke="#151515" stroke-width="0.7"/>
<line x1="213.4" y1="112.6" x2="216" y2="112.6" stroke="#151515" stroke-width="0.7"/>
<path d="M198.6,126.6 Q200,124.6 201.5,126.2 Q203,127.8 204.4,125.8" fill="none" stroke="#151515" stroke-width="0.8"/>
<line x1="225.3" y1="112.8" x2="437" y2="112.8" stroke="#151515" stroke-width="1.5"/>
<line x1="225.3" y1="127.2" x2="413.6" y2="127.2" stroke="#151515" stroke-width="1.5"/>
<circle cx="236.8" cy="112.8" r="4.8" fill="#fff" stroke="#151515" stroke-width="0.8"/>
<text x="236.8" y="112.9" font-size="4.5" font-weight="normal" text-anchor="middle" fill="#151515" dominant-baseline="central">I</text>
<text x="261" y="59.8" font-size="4.6" font-weight="bold" text-anchor="middle" fill="#111" dominant-baseline="central" stroke="#111" stroke-width="0.12">Charge électronique</text>
<line x1="249.3" y1="75" x2="273" y2="75" stroke="#151515" stroke-width="1.6"/>
<rect x="254.4" y="70.5" width="13.900000000000006" height="8.799999999999997" stroke="#151515" stroke-width="1.2" fill="#fff"/>
<line x1="255.5" y1="65.8" x2="268" y2="83" stroke="#151515" stroke-width="1.1"/>
<polygon points="254,63.6 258.2,66.4 255.6,68.2" fill="#151515" stroke="none" stroke-width="0"/>
<line x1="249.3" y1="75" x2="249.3" y2="127.2" stroke="#151515" stroke-width="1.6"/>
<line x1="273" y1="75" x2="273" y2="112.8" stroke="#151515" stroke-width="1.6"/>
<circle cx="249.3" cy="127.2" r="1.6" fill="#151515"/>
<circle cx="273" cy="112.8" r="1.6" fill="#151515"/>
<line x1="249.3" y1="98.9" x2="273" y2="98.9" stroke="#151515" stroke-width="1.6"/>
<circle cx="273" cy="88.5" r="4.8" fill="#fff" stroke="#151515" stroke-width="0.8"/>
<text x="273" y="88.6" font-size="4.5" font-weight="normal" text-anchor="middle" fill="#151515" dominant-baseline="central">I</text>
<circle cx="259.9" cy="98.9" r="4.8" fill="#fff" stroke="#151515" stroke-width="0.8"/>
<text x="259.9" y="99.0" font-size="4.5" font-weight="normal" text-anchor="middle" fill="#151515" dominant-baseline="central">U</text>
<text x="330.6" y="59.8" font-size="4.6" font-weight="bold" text-anchor="middle" fill="#111" dominant-baseline="central" stroke="#111" stroke-width="0.12">Relais de charge</text>
<rect x="326.3" y="90.2" width="6.300000000000011" height="10.700000000000003" stroke="#151515" stroke-width="1.2" fill="#fff"/>
<line x1="326.3" y1="100.9" x2="332.6" y2="90.2" stroke="#151515" stroke-width="1.1"/>
<line x1="329.5" y1="100.9" x2="329.5" y2="108.5" stroke="#151515" stroke-width="1.2"/>
<line x1="325.5" y1="107.8" x2="334" y2="112.8" stroke="#151515" stroke-width="1.3"/>
<circle cx="334" cy="112.8" r="1.6" fill="#151515"/>
<circle cx="336.4" cy="98.9" r="1.6" fill="#c8283a"/>
<text x="425" y="59.8" font-size="4.6" font-weight="bold" text-anchor="middle" fill="#111" dominant-baseline="central" stroke="#111" stroke-width="0.12">Batterie</text>
<polyline points="413.7,127.2 413.7,70.3 420.3,70.3" stroke="#151515" stroke-width="1.6" fill="none"/>
<polyline points="428.2,70.3 437,70.3 437,112.8" stroke="#151515" stroke-width="1.6" fill="none"/>
<line x1="420.3" y1="66.5" x2="420.3" y2="74.5" stroke="#151515" stroke-width="0.9"/>
<line x1="423.3" y1="68.2" x2="423.3" y2="72.8" stroke="#151515" stroke-width="1.4"/>
<line x1="425.8" y1="66.5" x2="425.8" y2="74.5" stroke="#151515" stroke-width="0.9"/>
<line x1="428.2" y1="68.2" x2="428.2" y2="72.8" stroke="#151515" stroke-width="1.4"/>
<line x1="413.7" y1="98" x2="437" y2="98" stroke="#151515" stroke-width="1.6"/>
<circle cx="437" cy="83.8" r="4.8" fill="#fff" stroke="#151515" stroke-width="0.8"/>
<text x="437" y="83.9" font-size="4.5" font-weight="normal" text-anchor="middle" fill="#151515" dominant-baseline="central">I</text>
<circle cx="423.6" cy="98" r="4.8" fill="#fff" stroke="#151515" stroke-width="0.8"/>
<text x="423.6" y="98.1" font-size="4.5" font-weight="normal" text-anchor="middle" fill="#151515" dominant-baseline="central">U</text>
<circle cx="437" cy="112.8" r="1.6" fill="#151515"/>
<circle cx="390.4" cy="112.8" r="1.6" fill="#151515"/>
<circle cx="376.8" cy="127.2" r="1.6" fill="#151515"/>
<line x1="390.4" y1="112.8" x2="390.4" y2="242" stroke="#151515" stroke-width="1.6"/>
<line x1="376.8" y1="127.2" x2="376.8" y2="242" stroke="#151515" stroke-width="1.6"/>
<circle cx="390.4" cy="138" r="4.8" fill="#fff" stroke="#151515" stroke-width="0.8"/>
<text x="390.4" y="138.1" font-size="4.5" font-weight="normal" text-anchor="middle" fill="#151515" dominant-baseline="central">I</text>
<rect x="327.5" y="145.1" width="25.0" height="22.200000000000017" stroke="#151515" stroke-width="1.2" fill="#fff"/>
<text x="340" y="153.0" font-size="4.7" font-weight="bold" text-anchor="middle" fill="#111" dominant-baseline="central" stroke="#111" stroke-width="0.01">Alimentat</text>
<text x="340" y="159.0" font-size="4.7" font-weight="bold" text-anchor="middle" fill="#111" dominant-baseline="central" stroke="#111" stroke-width="0.01">-ion</text>
<line x1="352.4" y1="149" x2="390.4" y2="149" stroke="#151515" stroke-width="1.6"/>
<line x1="352.4" y1="163" x2="376.8" y2="163" stroke="#151515" stroke-width="1.6"/>
<circle cx="390.4" cy="149" r="1.6" fill="#151515"/>
<circle cx="376.8" cy="163" r="1.6" fill="#151515"/>
<line x1="413.7" y1="127.2" x2="413.7" y2="164.4" stroke="#151515" stroke-width="1.6"/>
<line x1="437" y1="112.8" x2="437" y2="164.4" stroke="#151515" stroke-width="1.6"/>
<circle cx="437" cy="136" r="4.8" fill="#fff" stroke="#151515" stroke-width="0.8"/>
<text x="437" y="136.1" font-size="4.5" font-weight="normal" text-anchor="middle" fill="#151515" dominant-baseline="central">I</text>
<line x1="413.7" y1="150" x2="437" y2="150" stroke="#151515" stroke-width="1.6"/>
<circle cx="424.3" cy="150" r="4.8" fill="#fff" stroke="#151515" stroke-width="0.8"/>
<text x="424.3" y="150.1" font-size="4.5" font-weight="normal" text-anchor="middle" fill="#151515" dominant-baseline="central">U</text>
<rect x="408.3" y="164.4" width="32.30000000000001" height="27.599999999999994" stroke="#151515" stroke-width="1.4" fill="#fff"/>
<line x1="408.3" y1="164.4" x2="440.6" y2="192" stroke="#151515" stroke-width="1.2"/>
<line x1="429.7" y1="169.4" x2="432.3" y2="169.4" stroke="#151515" stroke-width="0.7"/>
<line x1="429.7" y1="170.9" x2="432.3" y2="170.9" stroke="#151515" stroke-width="0.7"/>
<line x1="416.2" y1="181.6" x2="418.8" y2="181.6" stroke="#151515" stroke-width="0.7"/>
<line x1="416.2" y1="183.1" x2="418.8" y2="183.1" stroke="#151515" stroke-width="0.7"/>
<text x="471.6" y="181.1" font-size="4.6" font-weight="bold" text-anchor="middle" fill="#111" dominant-baseline="central" stroke="#111" stroke-width="0.12">Convertisseur CC/CC</text>
<line x1="413.7" y1="192" x2="413.7" y2="290.6" stroke="#151515" stroke-width="1.6"/>
<line x1="437" y1="192" x2="437" y2="229" stroke="#151515" stroke-width="1.6"/>
<circle cx="437" cy="200.6" r="4.8" fill="#fff" stroke="#151515" stroke-width="0.8"/>
<text x="437" y="200.7" font-size="4.5" font-weight="normal" text-anchor="middle" fill="#151515" dominant-baseline="central">I</text>
<line x1="413.7" y1="215.3" x2="437" y2="215.3" stroke="#151515" stroke-width="1.6"/>
<circle cx="424.5" cy="215.3" r="4.8" fill="#fff" stroke="#151515" stroke-width="0.8"/>
<text x="424.5" y="215.4" font-size="4.5" font-weight="normal" text-anchor="middle" fill="#151515" dominant-baseline="central">U</text>
<circle cx="413.7" cy="225.1" r="1.6" fill="#151515"/>
<circle cx="437" cy="225.1" r="1.6" fill="#151515"/>
<circle cx="437" cy="238.8" r="1.6" fill="#151515"/>
<line x1="437" y1="238.8" x2="446.5" y2="229.6" stroke="#151515" stroke-width="1.3"/>
<line x1="441.6" y1="233.9" x2="451.4" y2="233.9" stroke="#151515" stroke-width="1.2"/>
<rect x="451.4" y="229.8" width="13.200000000000045" height="9.299999999999983" stroke="#151515" stroke-width="1.3" fill="#fff"/>
<line x1="451.4" y1="239.1" x2="464.6" y2="229.8" stroke="#151515" stroke-width="1.2"/>
<circle cx="454.2" cy="225.9" r="1.7" fill="#d8202a"/>
<text x="470" y="233.8" font-size="4.6" font-weight="bold" text-anchor="start" fill="#111" dominant-baseline="central" stroke="#111" stroke-width="0.12">Relais PACM</text>
<line x1="437" y1="238.8" x2="437" y2="290.6" stroke="#151515" stroke-width="1.6"/>
<line x1="394.8" y1="248.3" x2="437" y2="248.3" stroke="#151515" stroke-width="1.6"/>
<circle cx="437" cy="248.3" r="1.6" fill="#151515"/>
<circle cx="425.1" cy="248.3" r="4.8" fill="#fff" stroke="#151515" stroke-width="0.8"/>
<text x="425.1" y="248.4" font-size="4.5" font-weight="normal" text-anchor="middle" fill="#151515" dominant-baseline="central">I</text>
<line x1="394.8" y1="257.7" x2="413.7" y2="257.7" stroke="#151515" stroke-width="1.6"/>
<circle cx="413.7" cy="257.7" r="1.6" fill="#151515"/>
<circle cx="437" cy="261.5" r="4.8" fill="#fff" stroke="#151515" stroke-width="0.8"/>
<text x="437" y="261.6" font-size="4.5" font-weight="normal" text-anchor="middle" fill="#151515" dominant-baseline="central">I</text>
<line x1="413.7" y1="275.5" x2="437" y2="275.5" stroke="#151515" stroke-width="1.6"/>
<circle cx="425" cy="275.5" r="4.8" fill="#fff" stroke="#151515" stroke-width="0.8"/>
<text x="425" y="275.6" font-size="4.5" font-weight="normal" text-anchor="middle" fill="#151515" dominant-baseline="central">U</text>
<rect x="369.9" y="242" width="24.900000000000034" height="23" stroke="#151515" stroke-width="1.3" fill="#fff"/>
<text x="382.4" y="250.4" font-size="4.7" font-weight="bold" text-anchor="middle" fill="#111" dominant-baseline="central" stroke="#111" stroke-width="0.01">Alim.</text>
<text x="382.4" y="256.2" font-size="4.7" font-weight="bold" text-anchor="middle" fill="#111" dominant-baseline="central" stroke="#111" stroke-width="0.01">PAC</text>
<rect x="408.4" y="290.6" width="32.700000000000045" height="29.0" stroke="#151515" stroke-width="1.4" fill="#fff"/>
<text x="424.8" y="301.8" font-size="4.7" font-weight="bold" text-anchor="middle" fill="#111" dominant-baseline="central" stroke="#111" stroke-width="0.01">Stack</text>
<text x="424.8" y="307.6" font-size="4.7" font-weight="bold" text-anchor="middle" fill="#111" dominant-baseline="central" stroke="#111" stroke-width="0.01">PAC</text>
<path d="M449.6,304.8 C446.4,300 445.6,296 446.6,293.8 Q449.6,292.6 452.6,293.8 C453.6,296 452.8,300 449.6,304.8 C446.4,309.6 445.6,313.6 446.6,315.8 Q449.6,317 452.6,315.8 C453.6,313.6 452.8,309.6 449.6,304.8 Z" fill="none" stroke="#151515" stroke-width="1.1" stroke-linejoin="round"/>
<line x1="456" y1="301.3" x2="468" y2="301.3" stroke="#151515" stroke-width="1.3"/>
<polygon points="467,299.3 470.6,301.3 467,303.3" fill="#151515" stroke="none" stroke-width="0"/>
<line x1="456" y1="308.2" x2="468" y2="308.2" stroke="#151515" stroke-width="1.3"/>
<polygon points="467,306.2 470.6,308.2 467,310.2" fill="#151515" stroke="none" stroke-width="0"/>
<line x1="150.8" y1="351.1" x2="178.6" y2="351.1" stroke="#df1f26" stroke-width="1.4"/>
<circle cx="150.8" cy="351.1" r="1.7" fill="#df1f26"/>
<polygon points="178.6,351.1 183.5,348.2 183.5,354" fill="#fff" stroke="#e8707a" stroke-width="0.7"/>
<circle cx="186" cy="351.1" r="3.2" fill="#fff" stroke="#e8707a" stroke-width="0.7"/>
<line x1="189.6" y1="351.1" x2="283" y2="351.1" stroke="#df1f26" stroke-width="1.4"/>
<circle cx="195.9" cy="351.1" r="1.6" fill="#df1f26"/>
<polyline points="195.9,351.1 195.9,365.8 180,365.8" stroke="#df1f26" stroke-width="1.3" fill="none"/>
<polygon points="181,358 188,358 184.5,364.8" fill="#fff" stroke="#e8707a" stroke-width="0.7"/>
<polygon points="184.5,365 191,361.8 191,368.6" fill="#fff" stroke="#e8707a" stroke-width="0.7"/>
<text x="148.5" y="344.4" font-size="4.6" font-weight="bold" text-anchor="middle" fill="#111" dominant-baseline="central" stroke="#111" stroke-width="0.12">Clapet anti-retour H2</text>
<text x="170.8" y="373.0" font-size="4.6" font-weight="bold" text-anchor="middle" fill="#111" dominant-baseline="central" stroke="#111" stroke-width="0.12">Soupape de</text>
<circle cx="220.2" cy="341" r="4.6" fill="#fff" stroke="#df1f26" stroke-width="0.8"/>
<text x="220.2" y="341.1" font-size="4" font-weight="normal" text-anchor="middle" fill="#df1f26" dominant-baseline="central">P</text>
<line x1="220.2" y1="345.6" x2="220.2" y2="351.1" stroke="#df1f26" stroke-width="0.9"/>
<path d="M217.0,369.6 L217.0,355.6 Q217.0,353.2 219.2,352.6 L219.2,351.6 L221.2,351.6 L221.2,352.6 Q223.39999999999998,353.2 223.39999999999998,355.6 L223.39999999999998,369.6 Z" fill="#fff" stroke="#df1f26" stroke-width="1"/>
<text x="220.2" y="361.0" font-size="3.6" font-weight="normal" text-anchor="middle" fill="#e8707a" dominant-baseline="central">I</text>
<circle cx="247" cy="341" r="4.6" fill="#fff" stroke="#df1f26" stroke-width="0.8"/>
<text x="247" y="341.1" font-size="4" font-weight="normal" text-anchor="middle" fill="#df1f26" dominant-baseline="central">T</text>
<line x1="247" y1="345.6" x2="247" y2="351.1" stroke="#df1f26" stroke-width="0.9"/>
<path d="M243.8,369.6 L243.8,355.6 Q243.8,353.2 246,352.6 L246,351.6 L248,351.6 L248,352.6 Q250.2,353.2 250.2,355.6 L250.2,369.6 Z" fill="#fff" stroke="#df1f26" stroke-width="1"/>
<text x="247" y="361.0" font-size="3.6" font-weight="normal" text-anchor="middle" fill="#e8707a" dominant-baseline="central">II</text>
<circle cx="273.2" cy="341" r="4.6" fill="#fff" stroke="#df1f26" stroke-width="0.8"/>
<text x="273.2" y="341.1" font-size="4" font-weight="normal" text-anchor="middle" fill="#df1f26" dominant-baseline="central">T</text>
<line x1="273.2" y1="345.6" x2="273.2" y2="351.1" stroke="#df1f26" stroke-width="0.9"/>
<path d="M270.0,369.6 L270.0,355.6 Q270.0,353.2 272.2,352.6 L272.2,351.6 L274.2,351.6 L274.2,352.6 Q276.4,353.2 276.4,355.6 L276.4,369.6 Z" fill="#fff" stroke="#df1f26" stroke-width="1"/>
<text x="273.2" y="361.0" font-size="3.6" font-weight="normal" text-anchor="middle" fill="#e8707a" dominant-baseline="central">III</text>
<text x="238.6" y="377.6" font-size="4.6" font-weight="bold" text-anchor="middle" fill="#111" dominant-baseline="central" stroke="#111" stroke-width="0.12">Réservoir H2</text>
<polygon points="283.5,348.3 291.1,351.1 283.5,353.90000000000003" fill="#fff" stroke="#e8707a" stroke-width="0.7"/>
<polygon points="298.70000000000005,348.3 291.1,351.1 298.70000000000005,353.90000000000003" fill="#fff" stroke="#e8707a" stroke-width="0.7"/>
<circle cx="291.1" cy="351.1" r="1.6" fill="#df1f26"/>
<line x1="298.7" y1="351.1" x2="414.7" y2="351.1" stroke="#df1f26" stroke-width="1.4"/>
<line x1="291.1" y1="351.1" x2="291.1" y2="359.4" stroke="#df1f26" stroke-width="0.9"/>
<rect x="287.6" y="359.4" width="7.199999999999989" height="13.400000000000034" stroke="#df1f26" stroke-width="0.9" fill="#fff"/>
<line x1="287.6" y1="372.8" x2="294.8" y2="359.4" stroke="#df1f26" stroke-width="0.9"/>
<circle cx="298" cy="362" r="1.6" fill="#df1f26"/>
<text x="302.7" y="377.0" font-size="4.6" font-weight="bold" text-anchor="middle" fill="#111" dominant-baseline="central" stroke="#111" stroke-width="0.12">Vanne H2 externe</text>
<line x1="414.7" y1="319.6" x2="414.7" y2="351.1" stroke="#df1f26" stroke-width="1.3"/>
<polygon points="411.9,324.8 417.5,324.8 414.7,332.8" fill="#fff" stroke="#e8707a" stroke-width="0.7"/>
<polygon points="411.9,340.6 417.5,340.6 414.7,332.8" fill="#fff" stroke="#e8707a" stroke-width="0.7"/>
<circle cx="414.7" cy="332.8" r="1.6" fill="#df1f26"/>
<line x1="404.8" y1="332.8" x2="414.7" y2="332.8" stroke="#df1f26" stroke-width="1.2"/>
<rect x="391.5" y="328" width="13.300000000000011" height="9.5" stroke="#df1f26" stroke-width="1.1" fill="#fff"/>
<line x1="391.5" y1="337.5" x2="404.8" y2="328" stroke="#df1f26" stroke-width="1.0"/>
<circle cx="402.6" cy="324" r="1.6" fill="#df1f26"/>
<text x="391.5" y="343.7" font-size="4.6" font-weight="bold" text-anchor="middle" fill="#111" dominant-baseline="central" stroke="#111" stroke-width="0.12">Vanne H2 int.</text>
<line x1="370.7" y1="351.1" x2="370.7" y2="358.8" stroke="#df1f26" stroke-width="0.9"/>
<circle cx="370.7" cy="363.3" r="4.5" fill="#fff" stroke="#df1f26" stroke-width="0.8"/>
<text x="370.7" y="363.3" font-size="3.8" font-weight="normal" text-anchor="middle" fill="#df1f26" dominant-baseline="central">F</text>
<line x1="414.7" y1="351.1" x2="414.7" y2="355.8" stroke="#df1f26" stroke-width="0.9"/>
<circle cx="414.7" cy="360.3" r="4.5" fill="#fff" stroke="#df1f26" stroke-width="0.8"/>
<text x="414.7" y="360.3" font-size="3.8" font-weight="normal" text-anchor="middle" fill="#df1f26" dominant-baseline="central">P</text>
<polyline points="436.3,319.6 436.3,332.8 441.9,332.8" stroke="#df1f26" stroke-width="1.3" fill="none"/>
<polygon points="441.9,330.0 449.5,332.8 441.9,335.6" fill="#fff" stroke="#e8707a" stroke-width="0.7"/>
<polygon points="457.1,330.0 449.5,332.8 457.1,335.6" fill="#fff" stroke="#e8707a" stroke-width="0.7"/>
<circle cx="449.5" cy="332.8" r="1.6" fill="#df1f26"/>
<polyline points="457.1,332.8 462.3,332.8 462.3,326" stroke="#df1f26" stroke-width="1.3" fill="none"/>
<polygon points="459.8,326.4 462.3,322.4 464.8,326.4" fill="#df1f26" stroke="none" stroke-width="0"/>
<line x1="449.5" y1="332.8" x2="449.5" y2="343.8" stroke="#df1f26" stroke-width="0.9"/>
<rect x="446.9" y="343.8" width="5.5" height="12.099999999999966" stroke="#df1f26" stroke-width="0.9" fill="#fff"/>
<line x1="446.9" y1="355.9" x2="452.4" y2="343.8" stroke="#df1f26" stroke-width="0.9"/>
<circle cx="456.8" cy="346" r="1.6" fill="#df1f26"/>
<text x="459.4" y="354.2" font-size="4.6" font-weight="bold" text-anchor="start" fill="#111" dominant-baseline="central" stroke="#111" stroke-width="0.12">Vanne de purge</text>
</svg>
</body></html>
